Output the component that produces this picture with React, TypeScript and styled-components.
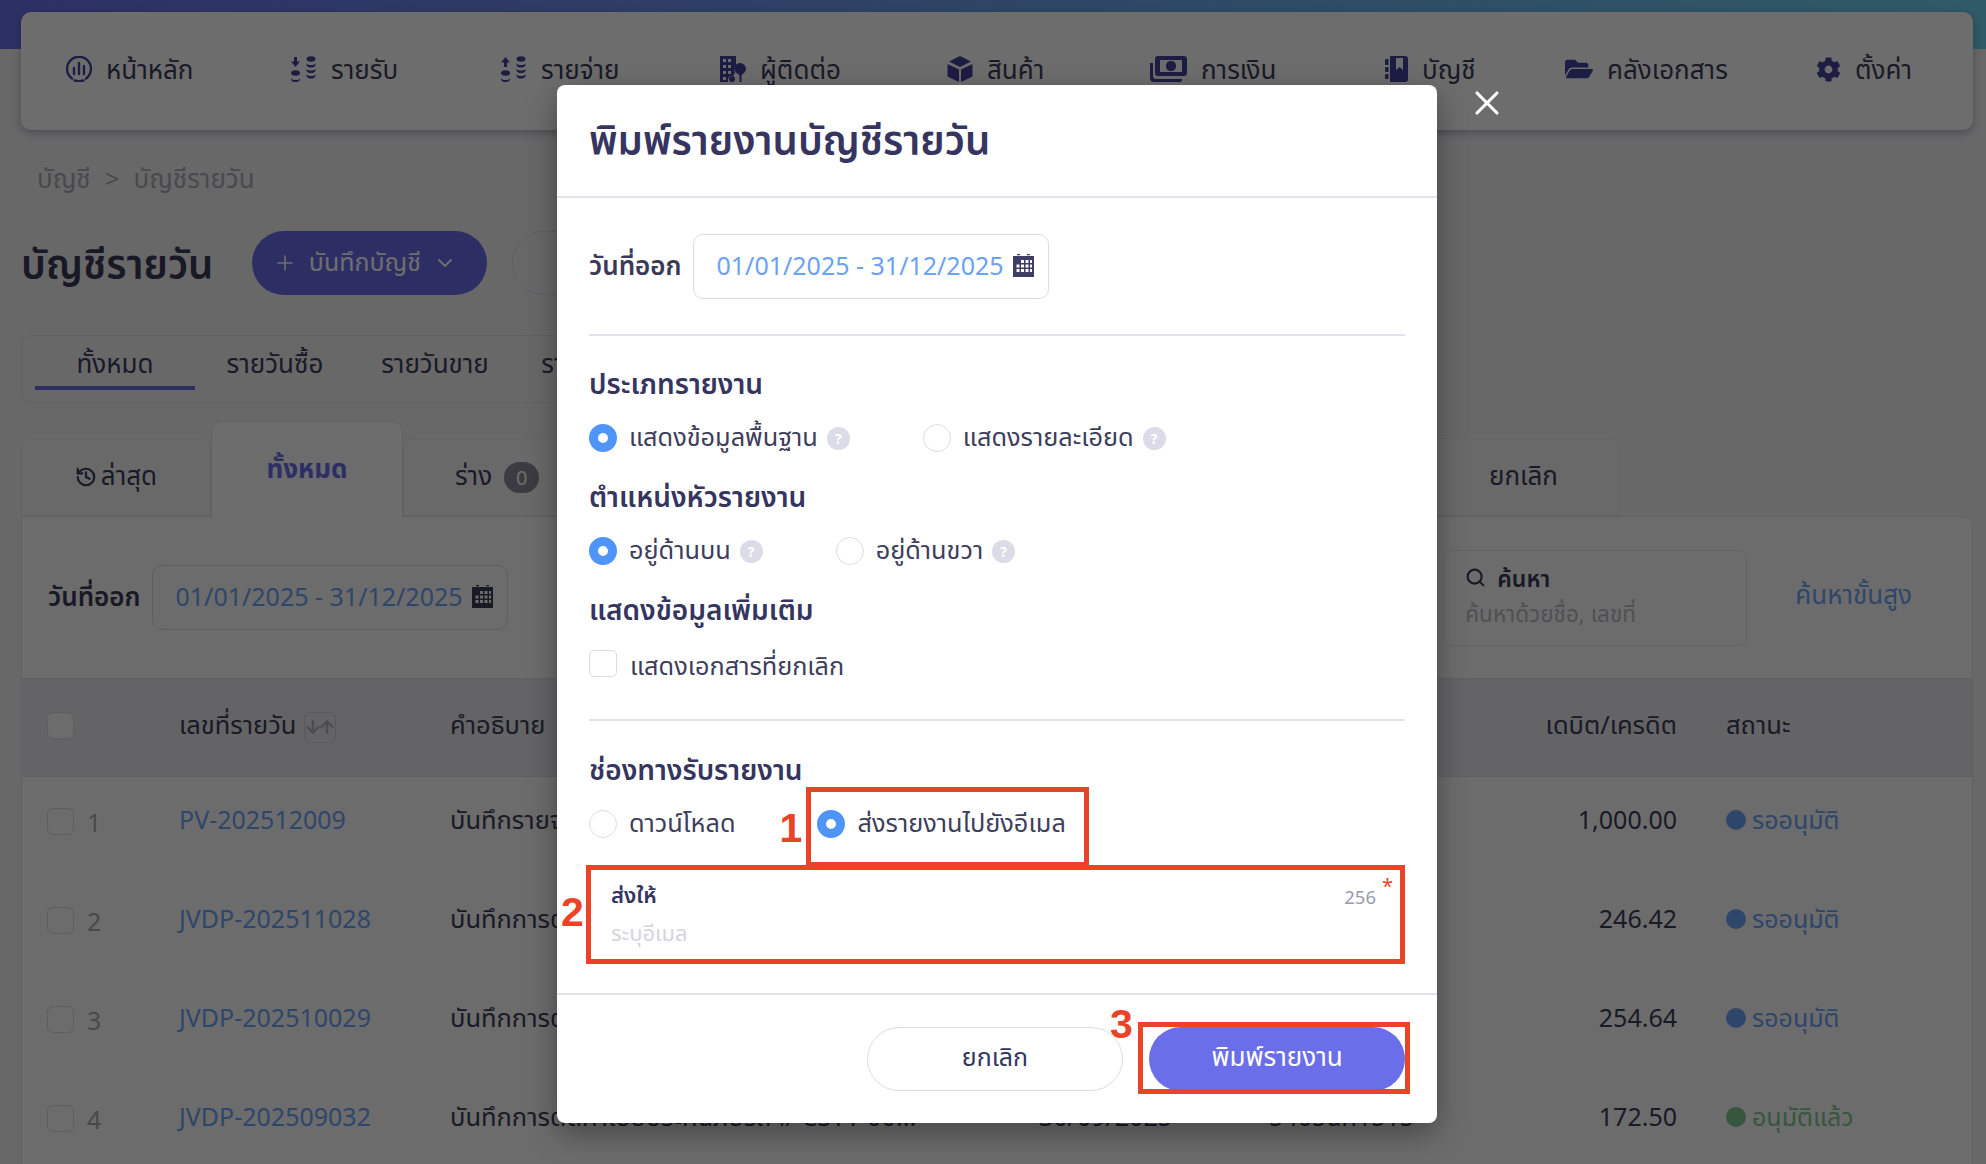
import React from 'react';
import styled, { createGlobalStyle } from 'styled-components';
import { ChevronDown, History, Plus, Search, X } from 'lucide-react';
import { FaArrowDown, FaArrowUp, FaCog, FaFolderOpen } from 'react-icons/fa';

const GlobalStyle = createGlobalStyle`
  html, body { margin: 0; height: 100%; overflow: hidden; }
  body { font-family: "Noto Sans", "Noto Sans Thai", "Open Sans", sans-serif; color: #3d3d5c; }
  * { box-sizing: border-box; }
`;

const Page = styled.div`
  position: relative; width: 1986px; height: 1164px; overflow: hidden;
  background: linear-gradient(90deg, #6a6fe9 0%, #6dd1ed 100%) no-repeat top / 100% 49px, #f0f0f4;
  padding: 12px 13px 0 21px;
`;
const Nav = styled.nav`
  height: 118px; background: #fdfdfd; border-radius: 10px; box-shadow: 0 3px 8px rgba(0,0,0,.25);
  display: grid; grid-template-columns: 225px 210px 219px 227px 203px 235px 180px 251px 1fr;
  align-items: start; padding: 40px 0 0 45px;
`;
const NavItem = styled.div`
  display: flex; align-items: center; gap: 14px; font-size: 26px; line-height: 34px; color: #3d3d5c; white-space: nowrap;
  svg { color: #44449e; flex: none; }
`;
const Breadcrumb = styled.div`
  margin: 32px 0 0 16px; font-size: 26px; line-height: 32px; color: #a9a9b4; display: flex; gap: 14px;
`;
const HeadRow = styled.div`margin-top: 37px; display: flex; align-items: center; gap: 39px; height: 64px;`;
const PageTitle = styled.h1`margin: 0; padding-top: 6px; font-size: 40px; font-weight: 600; color: #3a3a58;`;
const AddButton = styled.div`
  width: 235px; height: 64px; border-radius: 32px; background: #6a6be8; color: #fff; font-size: 25px; padding-right: 10px;
  display: flex; align-items: center; justify-content: center; gap: 12px; margin-right: -14px;
`;
const GhostButton = styled.div`width: 200px; height: 64px; border-radius: 32px; border: 1px solid #dcdce6;`;
const SubTabs = styled.div`
  margin-top: 40px; width: 1000px; height: 68px; border: 1px solid #e3e3ea; border-radius: 8px;
  display: flex; padding-left: 13px; gap: 0;
`;
const SubTab = styled.div<{ $on?: boolean }>`
  width: 160px; height: 54px; text-align: center; line-height: 54px; font-size: 26px; color: #3d3d5c;
  border-bottom: ${p => (p.$on ? '4px solid #6a6be8' : '4px solid transparent')};
`;
const FolderTabs = styled.div`margin-top: 18px; height: 95px; display: flex; align-items: flex-end;`;
const FolderTab = styled.div<{ $w: number; $on?: boolean }>`
  width: ${p => p.$w}px; height: ${p => (p.$on ? 96 : 78)}px; margin-bottom: ${p => (p.$on ? -1 : 0)}px;
  position: relative; background: ${p => (p.$on ? '#fbfbfb' : '#f3f3f6')}; border: 1px solid #e3e3ea;
  border-bottom: ${p => (p.$on ? 'none' : '1px solid #e3e3ea')}; border-radius: 10px 10px 0 0;
  display: flex; align-items: center; justify-content: center; gap: 4px;
  font-size: 26px; font-weight: ${p => (p.$on ? 700 : 400)}; color: ${p => (p.$on ? '#6a6be8' : '#3d3d5c')};
`;
const Badge = styled.span`
  width: 35px; height: 31px; border-radius: 16px; background: #8a8a97; color: #fff; font-size: 20px;
  display: inline-flex; align-items: center; justify-content: center; margin-left: 8px;
`;
const Panel = styled.section`
  background: #fbfbfb; border: 1px solid #e3e3ea; border-top-right-radius: 10px; border-bottom: none; height: 700px;
`;
const FilterRow = styled.div`
  height: 161px; display: flex; align-items: center; padding: 0 60px 0 26px;
`;
const DateLabel = styled.span`font-size: 26px; font-weight: 600; color: #3a3a58; margin-right: 11px;`;
const DateBox = styled.div<{ $strong?: boolean }>`
  width: 356px; height: 65px; border: 1px solid #dcdce6; border-radius: 10px; background: ${p => (p.$strong ? '#fff' : 'transparent')};
  display: flex; align-items: center; padding: 0 14px 3px 23px; justify-content: space-between;
  font-size: 25px; color: #6ba2f5;
`;
const SearchBox = styled.div`
  margin-left: auto; width: 304px; height: 96px; border: 1px solid #e3e3ea; border-radius: 8px; padding: 13px 21px;
`;
const SearchTitle = styled.div`display: flex; align-items: center; gap: 11px; font-size: 23px; line-height: 28px; font-weight: 600; color: #3a3a58;`;
const SearchHint = styled.div`font-size: 22.500px; line-height: 28px; margin-top: 8px; color: #b9b9c4; white-space: nowrap;`;
const AdvLink = styled.span`margin: -3px 0 0 48px; font-size: 26px; color: #6ba2f5;`;
const cols = '157px 271px 589px 230px 259px 149px 1fr';
const HeaderRow = styled.div`
  height: 99px; background: #e8e8ec; border-top: 1px solid #dedee4; border-bottom: 1px solid #dedee4; padding-bottom: 3px;
  display: grid; grid-template-columns: ${cols}; align-items: center; font-size: 25.500px; color: #3d3d5c;
`;
const BodyRow = styled.div`
  height: 99px; display: grid; grid-template-columns: ${cols}; align-items: start; padding-top: 25px; font-size: 25px; line-height: 34px; color: #3d3d5c;
`;
const Check = styled.span`
  display: inline-block; width: 27px; height: 27px; margin-top: 6px; border: 1px solid #d9d9e2; border-radius: 6px; background: #fbfbfb; flex: none;
`;
const CheckCell = styled.div<{ $head?: boolean }>`
  display: flex; align-items: flex-start; gap: 13px; padding-left: 25px; color: #a9a9b4;
  margin-top: ${p => (p.$head ? -8 : 0)}px;
`;
const RowNum = styled.span`margin-top: 3px;`;
const SortBox = styled.span`
  display: inline-flex; align-items: center; justify-content: center; width: 32px; height: 31px; margin-left: 8px; vertical-align: middle;
  border: 1px solid #cfcfd8; border-radius: 6px; color: #b5b5bd; font-size: 16px;
  svg { margin: 0 -1px; }
`;
const LinkCell = styled.div`color: #6ba2f5;`;
const Ellipsis = styled.div`white-space: nowrap; overflow: hidden; font-size: 25.500px;`;
const Amount = styled.div`text-align: right;`;
const HeadStatus = styled.div`padding-left: 49px;`;
const Status = styled.div<{ $c: string }>`
  padding-left: 49px; display: flex; align-items: center; gap: 6px; color: ${p => p.$c}; white-space: nowrap; font-size: 25px;
  &::before { content: ''; width: 20px; height: 20px; border-radius: 50%; background: ${p => p.$c}; margin-top: 2px; }
`;

const Overlay = styled.div`position: absolute; inset: 0; background: rgba(0,0,0,.57);`;
const Modal = styled.div`
  position: absolute; left: 557px; top: 85px; width: 880px; height: 1038px; background: #fff; border-radius: 8px;
  box-shadow: 0 10px 30px rgba(0,0,0,.35); display: flex; flex-direction: column;
`;
const CloseBtn = styled.div`position: absolute; left: 910px; top: -2px; color: #fff; line-height: 0;`;
const ModalHead = styled.header`
  height: 113px; border-bottom: 2px solid #e2e2ee; padding: 4px 32px 0; display: flex; align-items: center;
  font-size: 40px; font-weight: 600; color: #35355f;
`;
const ModalBody = styled.div`flex: 1; padding: 36px 32px 0 32px;`;
const DateRow = styled.div`display: flex; align-items: center; height: 65px;`;
const Rule = styled.hr<{ $top: number }>`margin: ${p => p.$top}px 0 0; border: 0; border-top: 2px solid #e2e2ee;`;
const Section = styled.div<{ $top: number }>`
  margin-top: ${p => p.$top}px; font-size: 28px; line-height: 36px; font-weight: 600; color: #35355f; white-space: nowrap;
`;
const OptionRow = styled.div<{ $top: number; $gap: number }>`
  margin-top: ${p => p.$top}px; display: flex; gap: ${p => p.$gap}px; height: 36px;
`;
const Option = styled.label`
  position: relative; display: flex; align-items: center; font-size: 25.300px; color: #3d3d5c; white-space: nowrap;
`;
const Radio = styled.span<{ $on?: boolean }>`
  width: 28px; height: 28px; border-radius: 50%; margin-right: 12px; flex: none; background: #fff;
  border: ${p => (p.$on ? '9px solid #4f94f9' : '1px solid #dcdce8')};
`;
const CheckBox = styled.span`
  width: 28px; height: 27px; border-radius: 5px; border: 1px solid #dcdce8; margin-right: 13px; flex: none; margin-top: -7px;
`;
const Help = styled.span`
  width: 23px; height: 23px; border-radius: 50%; background: #dcdce8; color: #fff; font-size: 14px; font-weight: 700;
  display: inline-flex; align-items: center; justify-content: center; margin-left: 9px;
`;
const MarkBox = styled.span`
  position: absolute; left: -11px; right: -23px; top: -19px; bottom: -25px; border: 5px solid #ea4327; pointer-events: none;
`;
const MarkNum = styled.span<{ $l: number; $t: number }>`
  position: absolute; left: ${p => p.$l}px; top: ${p => p.$t}px; font-family: "Liberation Sans", Arial, sans-serif;
  font-size: 41px; line-height: 44px; font-weight: 700; color: #ea4327;
`;
const Field = styled.div`
  position: relative; margin: 23px 0 0 -3px; height: 99px; border: 5px solid #ea4327; padding: 9px 20px;
`;
const FieldLabel = styled.div`font-size: 22px; line-height: 30px; font-weight: 600; color: #35355f;`;
const FieldHint = styled.div`font-size: 22px; line-height: 30px; margin-top: 8px; color: #d5d5de;`;
const Count = styled.span`position: absolute; right: 24px; top: 15px; font-size: 18.500px; line-height: 24px; color: #9a9aae;`;
const Star = styled.span`position: absolute; right: 7px; top: 4px; font-size: 20px; line-height: 24px; color: #ea4327;`;
const Foot = styled.footer`
  height: 130px; border-top: 2px solid #e2e2ee; display: flex; justify-content: flex-end; align-items: flex-start; gap: 26px; padding: 32px 32px 0 0;
`;
const CancelBtn = styled.div`
  width: 256px; height: 64px; border-radius: 32px; border: 1px solid #dcdce8; font-size: 25px; color: #35355f; padding-bottom: 2px;
  display: flex; align-items: center; justify-content: center;
`;
const PrintWrap = styled.div`position: relative;`;
const PrintBtn = styled.div`
  width: 256px; height: 64px; border-radius: 32px; background: #6a6fe9; font-size: 26px; color: #fff; padding-bottom: 2px;
  display: flex; align-items: center; justify-content: center;
`;
const PrintMark = styled.span`
  position: absolute; left: -11px; right: -5px; top: -5px; bottom: -3px; border: 5px solid #ea4327; pointer-events: none;
`;

const HomeIcon = () => (
  <svg width="26" height="26" viewBox="0 0 26 26" fill="none" stroke="currentColor" strokeWidth="2.4" strokeLinecap="round">
    <path d="M6 22.500A12 12 0 1 1 20 22.500" />
    <path d="M8.500 24.400a12.400 12.400 0 0 0 9 0" />
    <path d="M8 12v6M13 7v11M18 10v8" />
  </svg>
);
const CoinStack = ({ up }: { up?: boolean }) => (
  <svg width="26" height="26" viewBox="0 0 26 26" fill="currentColor">
    {up ? <path d="M4.500 1 9 6.500H6V11H3V6.500H0z" /> : <path d="M3 1h3v4.500h3L4.500 11 0 5.500h3z" />}
    <ellipse cx="4.500" cy="17" rx="4.500" ry="2.800" />
    <path d="M0 22.500c1 1.200 2.500 1.500 4.500 1.500s3.500-.3 4.500-1.500v1.200C8.500 25.200 6.500 26 4.500 26s-4-.8-4.500-2.300z" />
    <ellipse cx="20" cy="3" rx="4.500" ry="2.800" />
    {[7.5, 13, 18.5].map(y => (
      <path key={y} d={`M15.500 ${y}c1 1.200 2.500 1.500 4.500 1.500s3.500-.3 4.500-1.500v1.700c-.5 1.600-2.500 2.300-4.500 2.300s-4-.7-4.500-2.300z`} />
    ))}
  </svg>
);
const ContactIcon = () => (
  <svg width="26" height="26" viewBox="0 0 26 26" fill="currentColor">
    <path fillRule="evenodd" d="M0 0h16v9a7 7 0 0 0-1 8l-2 3a4 4 0 0 0-5 5v1H0zM3 3v3h3V3zm5 0v3h3V3zM3 9v3h3V9zm5 0v3h3V9zM3 15v3h3v-3zm5 0v3h3v-3zM3 21v3h3v-3z" />
    <path d="M20 7a6 6 0 0 1 6 6c0 3-3 4.500-4.500 6.500V26h-2v-6.500C18 17.500 14 16 14 13a6 6 0 0 1 6-6z" />
    <circle cx="12" cy="23" r="3" />
  </svg>
);
const CubeIcon = () => (
  <svg width="26" height="26" viewBox="0 0 26 26" fill="currentColor" strokeLinejoin="round">
    <path d="M13 0 24 5.500 13 11 2 5.500z" />
    <path d="M.5 8 12 13.500V26L1.500 21a2 2 0 0 1-1-1.700z" />
    <path d="M25.500 8 14 13.500V26l10.500-5a2 2 0 0 0 1-1.700z" />
  </svg>
);
const MoneyIcon = () => (
  <svg width="37" height="26" viewBox="0 0 37 26" fill="currentColor">
    <path fillRule="evenodd" d="M8 0h26a3 3 0 0 1 3 3v14a3 3 0 0 1-3 3H8a3 3 0 0 1-3-3V3a3 3 0 0 1 3-3zm2 4v12h22V4zm11 1c3.500 0 5 2.200 5 5s-1.500 5-5 5-5-2.200-5-5 1.500-5 5-5z" />
    <path d="M0 7h3v13a3 3 0 0 0 3 3h26v1a2 2 0 0 1-2 2H4a4 4 0 0 1-4-4z" />
  </svg>
);
const BookIcon = () => (
  <svg width="23" height="26" viewBox="0 0 23 26" fill="currentColor">
    <path fillRule="evenodd" d="M6 0h14a3 3 0 0 1 3 3v20a3 3 0 0 1-3 3H6a1 1 0 0 1-1-1V1a1 1 0 0 1 1-1zm5 2v12l3.500-3 3.500 3V2z" />
    <path d="M0 4a1 1 0 0 1 1-1h2.500v6H1a1 1 0 0 1-1-1zM0 12a1 1 0 0 1 1-1h2.500v5H1a1 1 0 0 1-1-1zM0 19a1 1 0 0 1 1-1h2.500v5H1a1 1 0 0 1-1-1z" />
  </svg>
);
const CalendarIcon = ({ color }: { color: string }) => (
  <svg width="21" height="23" viewBox="0 0 21 23" fill={color} style={{ flex: 'none' }}>
    <path fillRule="evenodd" d="M0 2h21v21H0zM8 6v3h3V6zm4.500 0v3h3V6zM17 6v3h2V6zM3.500 10.500v3h3v-3zm4.500 0v3h3v-3zm4.500 0v3h3v-3zm4.500 0v3h2v-3zM3.500 15v3h3v-3zm4.500 0v3h3v-3zm4.500 0v3h3v-3zm4.500 0v3h2v-3z" />
    <path d="M4 0h3v1.200H4zM14 0h3v1.200h-3z" />
  </svg>
);

const navItems: [React.ReactNode, string][] = [
  [<HomeIcon />, 'หน้าหลัก'],
  [<CoinStack />, 'รายรับ'],
  [<CoinStack up />, 'รายจ่าย'],
  [<ContactIcon />, 'ผู้ติดต่อ'],
  [<CubeIcon />, 'สินค้า'],
  [<MoneyIcon />, 'การเงิน'],
  [<BookIcon />, 'บัญชี'],
  [<FaFolderOpen size={28} />, 'คลังเอกสาร'],
  [<FaCog size={25} />, 'ตั้งค่า'],
];

const rows = [
  ['1', 'PV-202512009', 'บันทึกรายจ่าย ค่าบริการสำนักงาน', '31/12/2025', 'สำนักงาน', '1,000.00', 'รออนุมัติ', '#6ba2f5'],
  ['2', 'JVDP-202511028', 'บันทึกการตัดค่าเสื่อมราคา', '30/11/2025', 'สำนักงาน', '246.42', 'รออนุมัติ', '#6ba2f5'],
  ['3', 'JVDP-202510029', 'บันทึกการตัดค่าเสื่อมราคา', '31/10/2025', 'สำนักงาน', '254.64', 'รออนุมัติ', '#6ba2f5'],
  ['4', 'JVDP-202509032', 'บันทึกการตัดค่าเบี้ยประกันภัยรถ # CSTT 00...', '30/09/2025', '5465นค1515', '172.50', 'อนุมัติแล้ว', '#7fc88f'],
];

export default function App() {
  return (
    <Page>
      <GlobalStyle />
      <Nav>
        {navItems.map(([icon, label]) => (
          <NavItem key={label}>{icon}<span>{label}</span></NavItem>
        ))}
      </Nav>
      <Breadcrumb><span>บัญชี</span><span>&gt;</span><span>บัญชีรายวัน</span></Breadcrumb>
      <HeadRow>
        <PageTitle>บัญชีรายวัน</PageTitle>
        <AddButton><Plus size={24} strokeWidth={1.6} /><span>บันทึกบัญชี</span><ChevronDown size={24} /></AddButton>
        <GhostButton />
      </HeadRow>
      <SubTabs>
        <SubTab $on>ทั้งหมด</SubTab>
        <SubTab>รายวันซื้อ</SubTab>
        <SubTab>รายวันขาย</SubTab>
        <SubTab>รายวันจ่าย</SubTab>
      </SubTabs>
      <FolderTabs>
        <FolderTab $w={190}><History size={22} strokeWidth={2.4} />ล่าสุด</FolderTab>
        <FolderTab $w={192} $on>ทั้งหมด</FolderTab>
        <FolderTab $w={188}>ร่าง <Badge>0</Badge></FolderTab>
        <FolderTab $w={209}>รออนุมัติ</FolderTab>
        <FolderTab $w={209}>อนุมัติแล้ว</FolderTab>
        <FolderTab $w={209}>ชำระแล้ว</FolderTab>
        <FolderTab $w={209}>เสร็จสิ้น</FolderTab>
        <FolderTab $w={193}>ยกเลิก</FolderTab>
      </FolderTabs>
      <Panel>
        <FilterRow>
          <DateLabel>วันที่ออก</DateLabel>
          <DateBox><span>01/01/2025 - 31/12/2025</span><CalendarIcon color="#3d3d5c" /></DateBox>
          <SearchBox>
            <SearchTitle><Search size={21} strokeWidth={2.4} />ค้นหา</SearchTitle>
            <SearchHint>ค้นหาด้วยชื่อ, เลขที่</SearchHint>
          </SearchBox>
          <AdvLink>ค้นหาขั้นสูง</AdvLink>
        </FilterRow>
        <HeaderRow>
          <CheckCell $head><Check /></CheckCell>
          <div>เลขที่รายวัน<SortBox><FaArrowDown /><FaArrowUp /></SortBox></div>
          <div>คำอธิบาย</div>
          <div>วันที่</div>
          <div>อ้างอิง</div>
          <Amount>เดบิต/เครดิต</Amount>
          <HeadStatus>สถานะ</HeadStatus>
        </HeaderRow>
        {rows.map(r => (
          <BodyRow key={r[0]}>
            <CheckCell><Check /><RowNum>{r[0]}</RowNum></CheckCell>
            <LinkCell>{r[1]}</LinkCell>
            <Ellipsis>{r[2]}</Ellipsis>
            <div>{r[3]}</div>
            <div>{r[4]}</div>
            <Amount>{r[5]}</Amount>
            <Status $c={r[7]}>{r[6]}</Status>
          </BodyRow>
        ))}
      </Panel>
      <Overlay />
      <Modal>
        <CloseBtn><X size={40} strokeWidth={1.9} /></CloseBtn>
        <ModalHead>พิมพ์รายงานบัญชีรายวัน</ModalHead>
        <ModalBody>
          <DateRow>
            <DateLabel>วันที่ออก</DateLabel>
            <DateBox $strong><span>01/01/2025 - 31/12/2025</span><CalendarIcon color="#3d3d66" /></DateBox>
          </DateRow>
          <Rule $top={35} />
          <Section $top={29}>ประเภทรายงาน</Section>
          <OptionRow $top={19} $gap={73}>
            <Option><Radio $on />แสดงข้อมูลพื้นฐาน<Help>?</Help></Option>
            <Option><Radio />แสดงรายละเอียด<Help>?</Help></Option>
          </OptionRow>
          <Section $top={22}>ตำแหน่งหัวรายงาน</Section>
          <OptionRow $top={19} $gap={73}>
            <Option><Radio $on />อยู่ด้านบน<Help>?</Help></Option>
            <Option><Radio />อยู่ด้านขวา<Help>?</Help></Option>
          </OptionRow>
          <Section $top={22}>แสดงข้อมูลเพิ่มเติม</Section>
          <OptionRow $top={22} $gap={74}>
            <Option><CheckBox />แสดงเอกสารที่ยกเลิก</Option>
          </OptionRow>
          <Rule $top={34} />
          <Section $top={30}>ช่องทางรับรายงาน</Section>
          <OptionRow $top={19} $gap={82}>
            <Option><Radio />ดาวน์โหลด</Option>
            <Option>
              <Radio $on />ส่งรายงานไปยังอีเมล
              <MarkBox />
              <MarkNum $l={-38} $t={0}>1</MarkNum>
            </Option>
          </OptionRow>
          <Field>
            <MarkNum $l={-30} $t={20}>2</MarkNum>
            <FieldLabel>ส่งให้</FieldLabel>
            <FieldHint>ระบุอีเมล</FieldHint>
            <Count>256</Count>
            <Star>*</Star>
          </Field>
        </ModalBody>
        <Foot>
          <CancelBtn>ยกเลิก</CancelBtn>
          <PrintWrap>
            <PrintBtn>พิมพ์รายงาน</PrintBtn>
            <PrintMark />
            <MarkNum $l={-39} $t={-25}>3</MarkNum>
          </PrintWrap>
        </Foot>
      </Modal>
    </Page>
  );
}
